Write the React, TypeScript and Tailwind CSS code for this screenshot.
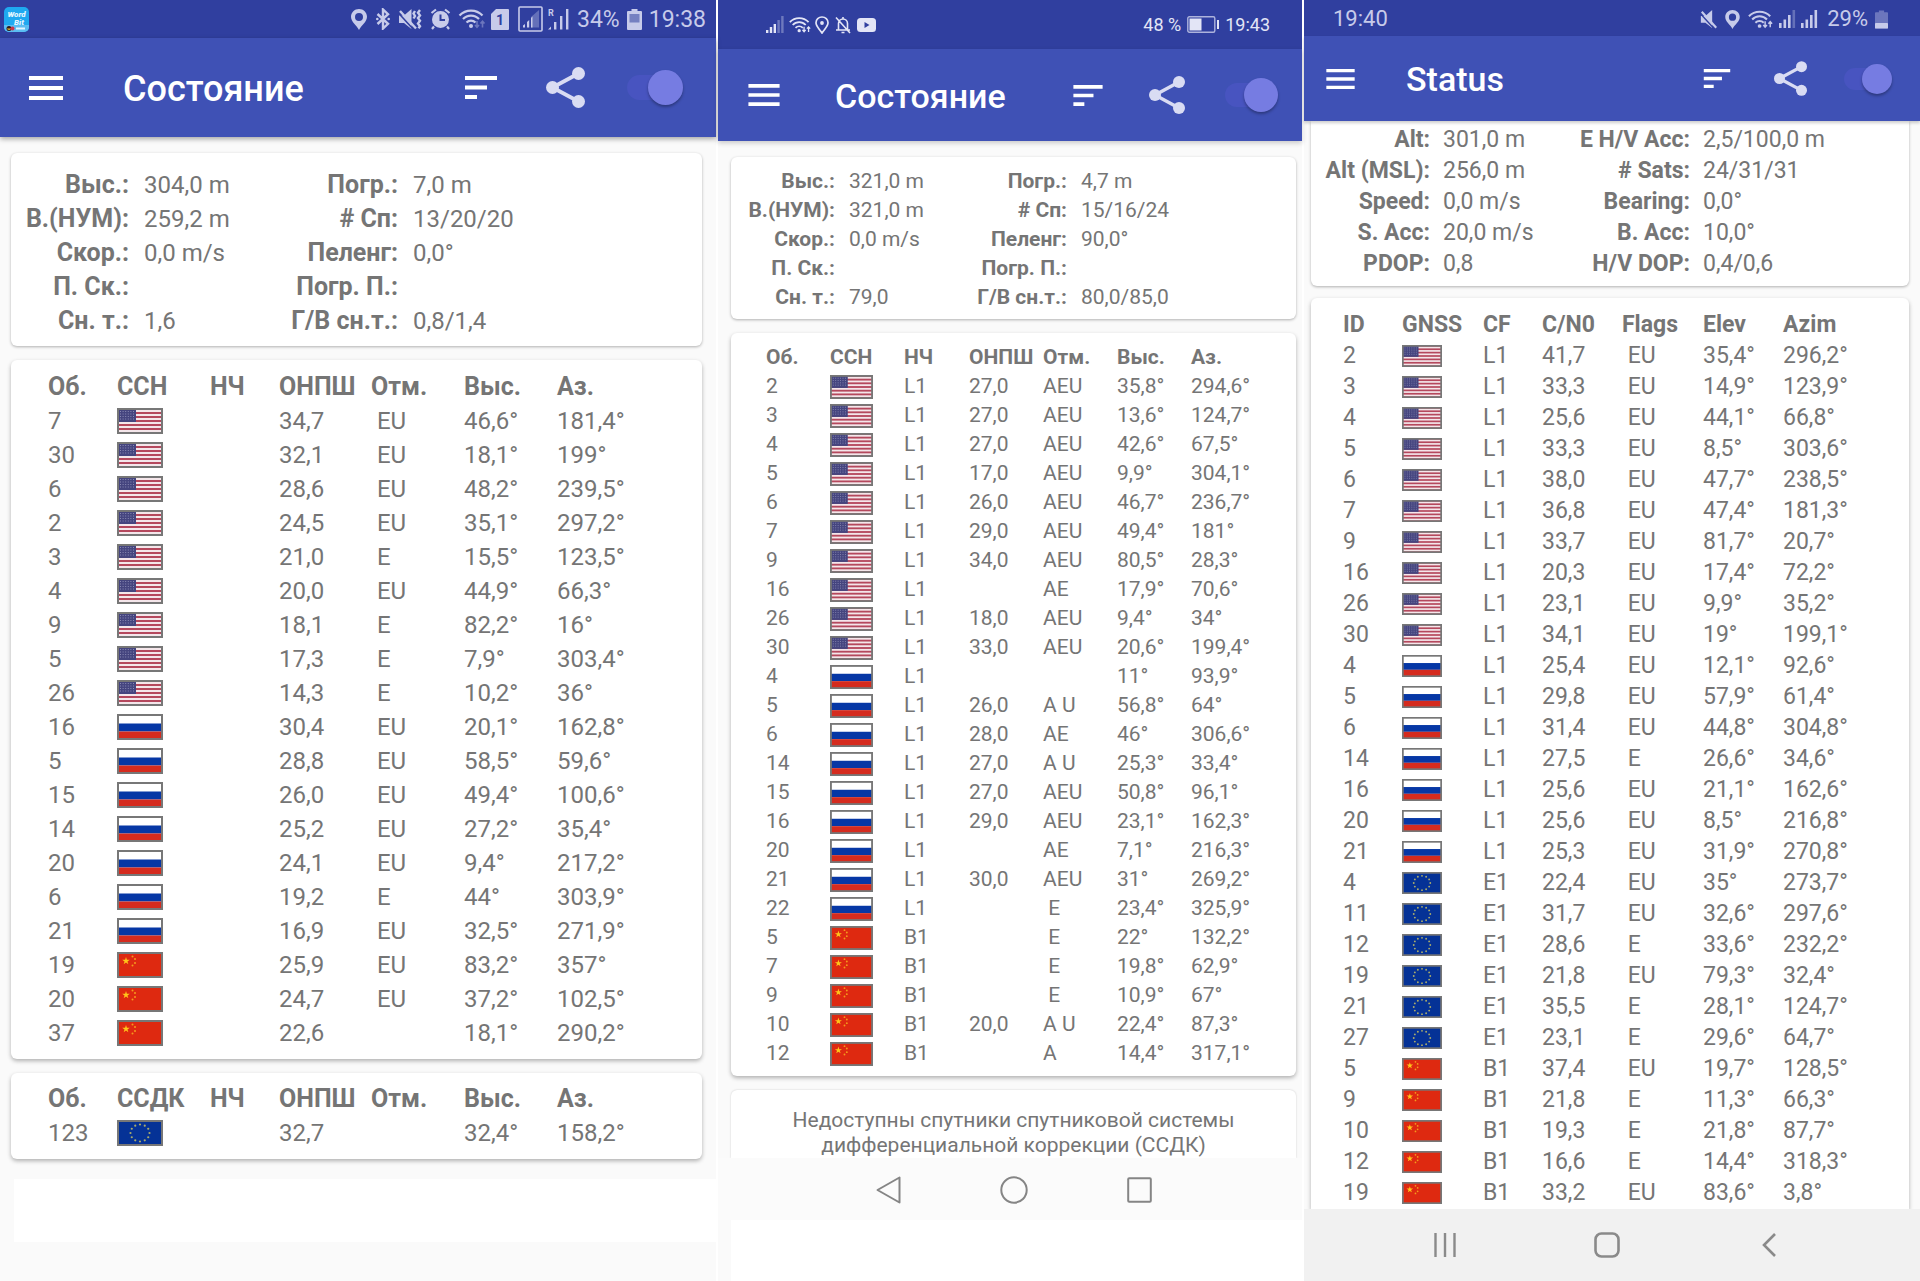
import React, { useState } from 'react';

type Country = 'us' | 'ru' | 'eu' | 'cn';

// id, flag, carrier, C/N0, flags, elevation, azimuth
type Satellite = [string, Country, string, string, string, string, string];

interface Theme {
  text: string;
  label: string;
  title: string;
  info: string;
  row: string;
  headRow: string;
  indent: string;
  flag: string;
  cols: string[];
}

const themes: Record<'left' | 'middle' | 'right', Theme> = {
  left: {
    text: 'text-[24px] leading-[34px]',
    label: 'text-[25px]',
    title: 'text-[36px]',
    info: 'grid-cols-[118px_110px_129px_1fr] gap-x-[15px]',
    row: 'h-[34px]',
    headRow: 'h-[34px]',
    indent: 'pl-[37px]',
    flag: 'h-[26px] w-[46px]',
    cols: ['w-[106px]', 'w-[93px]', 'w-[69px]', 'w-[92px]', 'w-[93px]', 'w-[93px]', ''],
  },
  middle: {
    text: 'text-[21px] leading-[29px]',
    label: 'text-[21px]',
    title: 'text-[34px]',
    info: 'grid-cols-[104px_92px_112px_1fr] gap-x-[14px]',
    row: 'h-[29px]',
    headRow: 'h-[29px]',
    indent: 'pl-[35px]',
    flag: 'h-[24px] w-[43px]',
    cols: ['w-[99px]', 'w-[74px]', 'w-[65px]', 'w-[74px]', 'w-[74px]', 'w-[74px]', ''],
  },
  right: {
    text: 'text-[23px] leading-[31px]',
    label: 'text-[23px]',
    title: 'text-[34px]',
    info: 'grid-cols-[119px_110px_124px_1fr] gap-x-[13px]',
    row: 'h-[31px]',
    headRow: 'h-[32px]',
    indent: 'pl-[32px]',
    flag: 'h-[22px] w-[40px]',
    cols: ['w-[91px]', 'w-[81px]', 'w-[59px]', 'w-[80px]', 'w-[81px]', 'w-[80px]', ''],
  },
};

const leftInfo = [
  ['Выс.:', '304,0 m', 'Погр.:', '7,0 m'],
  ['В.(НУМ):', '259,2 m', '# Сп:', '13/20/20'],
  ['Скор.:', '0,0 m/s', 'Пеленг:', '0,0°'],
  ['П. Ск.:', '', 'Погр. П.:', ''],
  ['Сн. т.:', '1,6', 'Г/В сн.т.:', '0,8/1,4'],
];

const middleInfo = [
  ['Выс.:', '321,0 m', 'Погр.:', '4,7 m'],
  ['В.(НУМ):', '321,0 m', '# Сп:', '15/16/24'],
  ['Скор.:', '0,0 m/s', 'Пеленг:', '90,0°'],
  ['П. Ск.:', '', 'Погр. П.:', ''],
  ['Сн. т.:', '79,0', 'Г/В сн.т.:', '80,0/85,0'],
];

const rightInfo = [
  ['Alt:', '301,0 m', 'E H/V Acc:', '2,5/100,0 m'],
  ['Alt (MSL):', '256,0 m', '# Sats:', '24/31/31'],
  ['Speed:', '0,0 m/s', 'Bearing:', '0,0°'],
  ['S. Acc:', '20,0 m/s', 'B. Acc:', '10,0°'],
  ['PDOP:', '0,8', 'H/V DOP:', '0,4/0,6'],
];

const gnssHead = ['Об.', 'ССН', 'НЧ', 'ОНПШ', 'Отм.', 'Выс.', 'Аз.'];
const sbasHead = ['Об.', 'ССДК', 'НЧ', 'ОНПШ', 'Отм.', 'Выс.', 'Аз.'];
const englishHead = ['ID', 'GNSS', 'CF', 'C/N0', 'Flags', 'Elev', 'Azim'];

const leftSats: Satellite[] = [
  ['7', 'us', '', '34,7', ' EU', '46,6°', '181,4°'],
  ['30', 'us', '', '32,1', ' EU', '18,1°', '199°'],
  ['6', 'us', '', '28,6', ' EU', '48,2°', '239,5°'],
  ['2', 'us', '', '24,5', ' EU', '35,1°', '297,2°'],
  ['3', 'us', '', '21,0', ' E', '15,5°', '123,5°'],
  ['4', 'us', '', '20,0', ' EU', '44,9°', '66,3°'],
  ['9', 'us', '', '18,1', ' E', '82,2°', '16°'],
  ['5', 'us', '', '17,3', ' E', '7,9°', '303,4°'],
  ['26', 'us', '', '14,3', ' E', '10,2°', '36°'],
  ['16', 'ru', '', '30,4', ' EU', '20,1°', '162,8°'],
  ['5', 'ru', '', '28,8', ' EU', '58,5°', '59,6°'],
  ['15', 'ru', '', '26,0', ' EU', '49,4°', '100,6°'],
  ['14', 'ru', '', '25,2', ' EU', '27,2°', '35,4°'],
  ['20', 'ru', '', '24,1', ' EU', '9,4°', '217,2°'],
  ['6', 'ru', '', '19,2', ' E', '44°', '303,9°'],
  ['21', 'ru', '', '16,9', ' EU', '32,5°', '271,9°'],
  ['19', 'cn', '', '25,9', ' EU', '83,2°', '357°'],
  ['20', 'cn', '', '24,7', ' EU', '37,2°', '102,5°'],
  ['37', 'cn', '', '22,6', '', '18,1°', '290,2°'],
];

const leftSbas: Satellite[] = [['123', 'eu', '', '32,7', '', '32,4°', '158,2°']];

const middleSats: Satellite[] = [
  ['2', 'us', 'L1', '27,0', 'AEU', '35,8°', '294,6°'],
  ['3', 'us', 'L1', '27,0', 'AEU', '13,6°', '124,7°'],
  ['4', 'us', 'L1', '27,0', 'AEU', '42,6°', '67,5°'],
  ['5', 'us', 'L1', '17,0', 'AEU', '9,9°', '304,1°'],
  ['6', 'us', 'L1', '26,0', 'AEU', '46,7°', '236,7°'],
  ['7', 'us', 'L1', '29,0', 'AEU', '49,4°', '181°'],
  ['9', 'us', 'L1', '34,0', 'AEU', '80,5°', '28,3°'],
  ['16', 'us', 'L1', '', 'AE', '17,9°', '70,6°'],
  ['26', 'us', 'L1', '18,0', 'AEU', '9,4°', '34°'],
  ['30', 'us', 'L1', '33,0', 'AEU', '20,6°', '199,4°'],
  ['4', 'ru', 'L1', '', '', '11°', '93,9°'],
  ['5', 'ru', 'L1', '26,0', 'A U', '56,8°', '64°'],
  ['6', 'ru', 'L1', '28,0', 'AE', '46°', '306,6°'],
  ['14', 'ru', 'L1', '27,0', 'A U', '25,3°', '33,4°'],
  ['15', 'ru', 'L1', '27,0', 'AEU', '50,8°', '96,1°'],
  ['16', 'ru', 'L1', '29,0', 'AEU', '23,1°', '162,3°'],
  ['20', 'ru', 'L1', '', 'AE', '7,1°', '216,3°'],
  ['21', 'ru', 'L1', '30,0', 'AEU', '31°', '269,2°'],
  ['22', 'ru', 'L1', '', ' E', '23,4°', '325,9°'],
  ['5', 'cn', 'B1', '', ' E', '22°', '132,2°'],
  ['7', 'cn', 'B1', '', ' E', '19,8°', '62,9°'],
  ['9', 'cn', 'B1', '', ' E', '10,9°', '67°'],
  ['10', 'cn', 'B1', '20,0', 'A U', '22,4°', '87,3°'],
  ['12', 'cn', 'B1', '', 'A', '14,4°', '317,1°'],
];

const rightSats: Satellite[] = [
  ['2', 'us', 'L1', '41,7', ' EU', '35,4°', '296,2°'],
  ['3', 'us', 'L1', '33,3', ' EU', '14,9°', '123,9°'],
  ['4', 'us', 'L1', '25,6', ' EU', '44,1°', '66,8°'],
  ['5', 'us', 'L1', '33,3', ' EU', '8,5°', '303,6°'],
  ['6', 'us', 'L1', '38,0', ' EU', '47,7°', '238,5°'],
  ['7', 'us', 'L1', '36,8', ' EU', '47,4°', '181,3°'],
  ['9', 'us', 'L1', '33,7', ' EU', '81,7°', '20,7°'],
  ['16', 'us', 'L1', '20,3', ' EU', '17,4°', '72,2°'],
  ['26', 'us', 'L1', '23,1', ' EU', '9,9°', '35,2°'],
  ['30', 'us', 'L1', '34,1', ' EU', '19°', '199,1°'],
  ['4', 'ru', 'L1', '25,4', ' EU', '12,1°', '92,6°'],
  ['5', 'ru', 'L1', '29,8', ' EU', '57,9°', '61,4°'],
  ['6', 'ru', 'L1', '31,4', ' EU', '44,8°', '304,8°'],
  ['14', 'ru', 'L1', '27,5', ' E', '26,6°', '34,6°'],
  ['16', 'ru', 'L1', '25,6', ' EU', '21,1°', '162,6°'],
  ['20', 'ru', 'L1', '25,6', ' EU', '8,5°', '216,8°'],
  ['21', 'ru', 'L1', '25,3', ' EU', '31,9°', '270,8°'],
  ['4', 'eu', 'E1', '22,4', ' EU', '35°', '273,7°'],
  ['11', 'eu', 'E1', '31,7', ' EU', '32,6°', '297,6°'],
  ['12', 'eu', 'E1', '28,6', ' E', '33,6°', '232,2°'],
  ['19', 'eu', 'E1', '21,8', ' EU', '79,3°', '32,4°'],
  ['21', 'eu', 'E1', '35,5', ' E', '28,1°', '124,7°'],
  ['27', 'eu', 'E1', '23,1', ' E', '29,6°', '64,7°'],
  ['5', 'cn', 'B1', '37,4', ' EU', '19,7°', '128,5°'],
  ['9', 'cn', 'B1', '21,8', ' E', '11,3°', '66,3°'],
  ['10', 'cn', 'B1', '19,3', ' E', '21,8°', '87,7°'],
  ['12', 'cn', 'B1', '16,6', ' E', '14,4°', '318,3°'],
  ['19', 'cn', 'B1', '33,2', ' EU', '83,6°', '3,8°'],
];

const starPath = 'M0 -1 L.225 -.309 L.951 -.309 L.363 .118 L.588 .809 L0 .382 L-.588 .809 L-.363 .118 L-.951 -.309 L-.225 -.309 Z';

const Flag = ({ country, className }: { country: Country; className: string }) => (
  <svg viewBox="0 0 46 26" preserveAspectRatio="none" className={`block ${className}`} role="img" aria-label={country}>
    {country === 'us' && (
      <>
        <rect width="46" height="26" fill="#f4e6ea" />
        {[0, 1, 2, 3, 4, 5, 6].map((i) => (
          <rect key={i} y={i * 4} width="46" height="2" fill="#b5485d" />
        ))}
        <rect width="19" height="14" fill="#45457f" />
        {[3.5, 6, 8.5, 11].map((y) => (
          <path key={y} d={`M3 ${y}H18`} stroke="#8a8ab4" strokeWidth="1" strokeDasharray="1 1.6" />
        ))}
      </>
    )}
    {country === 'ru' && (
      <>
        <rect width="46" height="26" fill="#ffffff" />
        <rect y="9.5" width="46" height="8" fill="#0637a5" />
        <rect y="17.5" width="46" height="9" fill="#d52b1e" />
      </>
    )}
    {country === 'eu' && (
      <>
        <rect width="46" height="26" fill="#053296" />
        {Array.from({ length: 12 }, (_, i) => (
          <circle
            key={i}
            cx={23 + 9.5 * Math.sin((i * Math.PI) / 6)}
            cy={13 - 8.5 * Math.cos((i * Math.PI) / 6)}
            r="1.1"
            fill="#a9ab6b"
          />
        ))}
      </>
    )}
    {country === 'cn' && (
      <>
        <rect width="46" height="26" fill="#de2910" />
        <path d={starPath} transform="translate(9 9) scale(4)" fill="#ffc61a" />
        {[[15.5, 4.5], [18, 7], [18, 11], [15.5, 13.5]].map(([x, y]) => (
          <circle key={`${x}-${y}`} cx={x} cy={y} r="1" fill="#f49a1c" />
        ))}
      </>
    )}
    <rect x="1" y="1" width="44" height="24" fill="none" stroke="#777777" strokeWidth="2" />
  </svg>
);

// Status bar icons
const PinIcon = ({ className }: { className: string }) => (
  <svg viewBox="0 0 16 21" className={className} fill="currentColor">
    <path fillRule="evenodd" d="M8 0C3.5 0 0 3.4 0 7.8 0 13 5.500 16 8 21c2.500-5 8-8 8-13.200C16 3.400 12.500 0 8 0Zm0 4a4 4 0 1 1 0 8 4 4 0 0 1 0-8Z" />
  </svg>
);

const PinOutlineIcon = () => (
  <svg viewBox="0 0 14 18" className="h-[18px] w-[14px]">
    <path d="M7 1C3.600 1 1 3.500 1 6.800 1 10.500 4.500 13 7 17c2.500-4 6-6.500 6-10.200C13 3.500 10.400 1 7 1Z" fill="none" stroke="currentColor" strokeWidth="1.700" />
    <circle cx="7" cy="7" r="1.900" fill="currentColor" />
  </svg>
);

const BluetoothIcon = () => (
  <svg viewBox="0 0 14 22" className="h-[22px] w-[14px]" fill="none" stroke="currentColor" strokeWidth="2.400">
    <path d="M1.500 6 12 15.800 7 20.500V1.500L12 6.200 1.500 16" />
    <circle cx="1.300" cy="11" r="1.300" fill="currentColor" stroke="none" />
    <circle cx="12.700" cy="11" r="1.300" fill="currentColor" stroke="none" />
  </svg>
);

const MuteIcon = ({ vibrate = false, className }: { vibrate?: boolean; className: string }) => (
  <svg viewBox={vibrate ? '0 0 23 21' : '0 0 18 21'} className={className} fill="currentColor">
    <path d="M0 6.500h5L12.500 0v20L5 14H0Z" />
    <path d="M-1 3.500 15 21" stroke="#303f9f" strokeWidth="1.600" />
    <path d="M1 2 17 19.500" stroke="currentColor" strokeWidth="2.400" />
    {vibrate && (
      <path d="M16 2 14.500 4.500 16 7l-1.500 2.500M21 1l-2 2.700 2 2.700-2 2.700 2 2.700-2 2.700 2 2.700-1.500 2" fill="none" stroke="currentColor" strokeWidth="2.400" />
    )}
  </svg>
);

const AlarmIcon = () => (
  <svg viewBox="0 0 21 22" className="h-[22px] w-[21px]">
    <circle cx="10.500" cy="11.500" r="8.500" fill="currentColor" />
    <path d="M1.500 5 6 1.500M19.500 5 15 1.500M4 18.500 2 21M17 18.500 19 21" stroke="currentColor" strokeWidth="2.200" />
    <path d="M10.500 6.500V12H15" fill="none" stroke="#303f9f" strokeWidth="2" />
  </svg>
);

const WifiIcon = ({ className, dimArrows = false }: { className: string; dimArrows?: boolean }) => (
  <svg viewBox="0 0 27 20" className={className} fill="none" stroke="currentColor" strokeWidth="2.200">
    <path d="M1 6.500a16 16 0 0 1 23 0M4.500 10a11 11 0 0 1 16 0M8 13.500a6.500 6.500 0 0 1 9 0" />
    <circle cx="12.500" cy="17" r="2" fill="currentColor" stroke="none" />
    <path d="M18.500 12v6M16.500 16l2 2.200 2-2.200M24 18.500v-6M22 14.500l2-2.200 2 2.200" strokeWidth="1.600" opacity={dimArrows ? 0.4 : 1} />
  </svg>
);

const SignalIcon = ({ className, dim = 0 }: { className: string; dim?: number }) => (
  <svg viewBox="0 0 17 18" className={className} fill="currentColor">
    {[0, 1, 2, 3].map((i) => (
      <rect key={i} x={i * 4.5} y={[13, 9.5, 5, 0][i]} width="2.600" height={[5, 8.5, 13, 18][i]} opacity={i > 3 - dim ? 0.35 : 1} />
    ))}
  </svg>
);

// five bars, the two tallest are off
const FiveBarSignalIcon = () => (
  <svg viewBox="0 0 18 17" className="h-[17px] w-[18px]" fill="currentColor">
    {[3, 6, 9, 13, 17].map((height, i) => (
      <rect key={height} x={i * 3.8} y={17 - height} width="2.400" height={height} opacity={i > 2 ? 0.35 : 1} />
    ))}
  </svg>
);

const SimIcon = () => (
  <svg viewBox="0 0 18 21" className="h-[21px] w-[18px]">
    <path d="M5 0h12a1 1 0 0 1 1 1v19a1 1 0 0 1-1 1H1a1 1 0 0 1-1-1V5Z" fill="currentColor" />
    <text x="9" y="16" textAnchor="middle" fontSize="14" fontWeight="700" fill="#303f9f">1</text>
  </svg>
);

const BoxedSignalIcon = () => (
  <svg viewBox="0 0 25 26" className="h-[26px] w-[25px]" fill="currentColor">
    <rect x="1" y="1" width="23" height="24" rx="1" fill="none" stroke="currentColor" strokeWidth="1.600" />
    <path d="M5 21.500V19.500L7 18v3.500ZM9 21.500V16l2.200-2v7.500Z" />
    <path d="M13 21.500V11l8-7v17.500Z" opacity=".35" />
    <path d="M13 21.500V12l1.500-1.500v11Z" />
  </svg>
);

const RoamingSignalIcon = () => (
  <svg viewBox="0 0 21 22" className="h-[22px] w-[21px]" fill="currentColor">
    <text x="0" y="8" fontSize="9" fontWeight="700">R</text>
    <path d="M0 21.500l3-3v3ZM6 14h2.400v7.500H6ZM12 8h2.400v13.500H12ZM18 1h2.400v20.500H18Z" />
  </svg>
);

const BatteryIcon = ({ className, level }: { className: string; level: 'mid' | 'low' }) => (
  <svg viewBox="0 0 15 21" className={className} fill="currentColor">
    <path d="M4.500 0h6v2H14a1 1 0 0 1 1 1v17a1 1 0 0 1-1 1H1a1 1 0 0 1-1-1V3a1 1 0 0 1 1-1h3.500Z" opacity={level === 'low' ? 0.4 : 1} />
    {level === 'mid' ? <rect x="2.500" y="5" width="10" height="8.500" fill="#7580c1" /> : <rect y="14.500" width="15" height="6.500" rx="1" />}
  </svg>
);

const BellOffIcon = () => (
  <svg viewBox="0 0 16 18" className="h-[18px] w-[16px]" fill="none" stroke="currentColor" strokeWidth="1.600">
    <path d="M3.500 13.500V7.500C3.500 5 5.500 3 8 3s4.500 2 4.500 4.500v6M1 14h14M8 1v2M6.500 16.500h3M1 1.500 15 17" />
  </svg>
);

const VideoIcon = () => (
  <svg viewBox="0 0 19 14" className="h-[14px] w-[19px]">
    <rect width="19" height="14" rx="3.500" fill="currentColor" />
    <path d="M7.500 4v6l5-3Z" fill="#303f9f" />
  </svg>
);

const WideBatteryIcon = () => (
  <svg viewBox="0 0 32 17" className="h-[17px] w-[32px]">
    <rect x=".8" y=".8" width="27" height="15.400" rx="1.500" fill="none" stroke="currentColor" strokeWidth="1.400" opacity=".7" />
    <rect x="2.500" y="2.500" width="12" height="12" fill="currentColor" />
    <rect x="30" y="4" width="2" height="9" fill="currentColor" />
  </svg>
);

const WordBitLogo = () => (
  <svg viewBox="0 0 25 25" className="h-[25px] w-[25px]" role="img" aria-label="Word Bit">
    <rect width="25" height="25" rx="5" fill="#1fa9f0" />
    <path d="M0 18h25v2a5 5 0 0 1-5 5H5a5 5 0 0 1-5-5Z" fill="#5bbdf2" />
    <text x="12.500" y="10" textAnchor="middle" fontSize="8" fontWeight="900" fontStyle="italic" fill="#e3f6ff">Word</text>
    <text x="15" y="17.500" textAnchor="middle" fontSize="8" fontWeight="900" fontStyle="italic" fill="#e3f6ff">Bit</text>
    <circle cx="5" cy="21.500" r="2.500" fill="#2c1a1a" />
    <path d="M2.800 21.500a2.500 2.500 0 0 0 4.500 0Z" fill="#f2b824" />
    <circle cx="8.500" cy="21.500" r="2" fill="#c9364a" />
    <rect x="12" y="20.500" width="9" height="2" fill="#e3f6ff" />
  </svg>
);

// Toolbar icons
const MenuIcon = ({ className }: { className: string }) => (
  <svg viewBox="0 0 34 24" className={className} fill="currentColor">
    <path d="M0 0h34v4H0ZM0 10h34v4H0ZM0 20h34v4H0Z" />
  </svg>
);

const SortIcon = ({ className }: { className: string }) => (
  <svg viewBox="0 0 32 23" className={className} fill="currentColor">
    <path d="M0 0h32v4H0ZM0 9.500h22v4H0ZM0 19h12v4H0Z" />
  </svg>
);

const ShareIcon = ({ className }: { className: string }) => (
  <svg viewBox="0 0 39 41" className={className} fill="currentColor">
    <path d="M6.500 20.500 32.500 6.500M6.500 20.500l26 14" stroke="currentColor" strokeWidth="3.800" />
    <circle cx="6.500" cy="20.500" r="6.500" />
    <circle cx="32.500" cy="6.500" r="6.500" />
    <circle cx="32.500" cy="34.500" r="6.500" />
  </svg>
);

const Toggle = ({ size, label }: { size: 'lg' | 'md' | 'sm'; label: string }) => {
  const [on, setOn] = useState(true);
  const box = { lg: 'h-[35px] w-[56px]', md: 'h-[34px] w-[53px]', sm: 'h-[30px] w-[48px]' }[size];
  const track = { lg: 'h-[25px]', md: 'h-[24px]', sm: 'h-[22px]' }[size];
  const thumb = { lg: 'size-[35px]', md: 'size-[34px]', sm: 'size-[30px]' }[size];

  return (
    <label className={`relative flex items-center ${box}`}>
      <input
        type="checkbox"
        className="sr-only"
        aria-label={label}
        checked={on}
        onChange={(e) => setOn(e.target.checked)}
      />
      <span className={`w-full rounded-full bg-[#4854c0] ${track}`} />
      <span className={`absolute top-0 rounded-full bg-[#767ce2] shadow-[0_2px_3px_rgba(0,0,0,0.3)] ${on ? 'right-0' : 'left-0'} ${thumb}`} />
    </label>
  );
};

const InfoCard = ({ rows, theme, className }: { rows: string[][]; theme: Theme; className: string }) => (
  <section className={`bg-white shadow-[0_1px_3px_rgba(0,0,0,0.3)] ${className}`}>
    <dl className={`grid text-[#757575] ${theme.text} ${theme.info}`}>
      {rows.map(([label, value, label2, value2]) => (
        <React.Fragment key={label}>
          <dt className={`text-right font-bold whitespace-nowrap ${theme.label}`}>{label}</dt>
          <dd className="whitespace-nowrap">{value}</dd>
          <dt className={`text-right font-bold whitespace-nowrap ${theme.label}`}>{label2}</dt>
          <dd className="whitespace-nowrap">{value2}</dd>
        </React.Fragment>
      ))}
    </dl>
  </section>
);

const SatelliteCard = ({
  head,
  rows,
  theme,
  className,
}: {
  head: string[];
  rows: Satellite[];
  theme: Theme;
  className: string;
}) => (
  <section className={`bg-white shadow-[0_2px_4px_rgba(0,0,0,0.3)] ${className}`}>
    <table className={`w-full table-fixed text-left text-[#757575] ${theme.text}`}>
      <colgroup>
        {/* last column takes what is left */}
        {theme.cols.map((width, i) => (
          <col key={i} className={width} />
        ))}
      </colgroup>
      <thead>
        <tr className={`${theme.headRow} ${theme.label}`}>
          {head.map((name, i) => (
            <th key={name} className={`p-0 font-bold whitespace-nowrap ${i === 0 ? theme.indent : ''}`}>{name}</th>
          ))}
        </tr>
      </thead>
      <tbody>
        {rows.map(([id, country, carrier, cn0, flags, elev, azim]) => (
          <tr key={`${country}-${id}`} className={theme.row}>
            <td className={`p-0 ${theme.indent}`}>{id}</td>
            <td className="p-0"><Flag country={country} className={theme.flag} /></td>
            <td className="p-0">{carrier}</td>
            <td className="p-0">{cn0}</td>
            <td className="p-0 whitespace-pre">{flags}</td>
            <td className="p-0">{elev}</td>
            <td className="p-0">{azim}</td>
          </tr>
        ))}
      </tbody>
    </table>
  </section>
);

const LeftPhone = () => (
  <div className="flex min-w-0 flex-col bg-[#fafafa]">
    <div className="flex h-[38px] items-center bg-[#303f9f] pr-[10px] pl-[4px] text-[#c7cbea]">
      <WordBitLogo />
      <div className="ml-auto flex items-center">
        <PinIcon className="h-[21px] w-[16px]" />
        <span className="ml-[9px]"><BluetoothIcon /></span>
        <MuteIcon vibrate className="ml-[9px] h-[21px] w-[23px]" />
        <span className="ml-[8px]"><AlarmIcon /></span>
        <WifiIcon dimArrows className="ml-[7px] h-[20px] w-[28px]" />
        <span className="ml-[5px]"><SimIcon /></span>
        <span className="ml-[9px]"><BoxedSignalIcon /></span>
        <span className="ml-[5px]"><RoamingSignalIcon /></span>
        <span className="ml-[8px] text-[23px] leading-none">34%</span>
        <BatteryIcon level="mid" className="ml-[7px] h-[21px] w-[15px]" />
        <span className="ml-[7px] text-[23px] leading-none">19:38</span>
      </div>
    </div>
    <header className="relative flex h-[99px] items-center bg-[#3f51b5] pr-[33px] pl-[29px] text-white shadow-[0_2px_5px_rgba(0,0,0,0.35)]">
      <button type="button" aria-label="Меню"><MenuIcon className="h-[24px] w-[34px]" /></button>
      <h1 className={`ml-[60px] pt-[2px] font-medium ${themes.left.title}`}>Состояние</h1>
      <button type="button" aria-label="Сортировка" className="ml-auto"><SortIcon className="h-[23px] w-[32px]" /></button>
      <button type="button" aria-label="Поделиться" className="mr-[42px] ml-[49px] text-[#d9dcf3]"><ShareIcon className="h-[41px] w-[39px]" /></button>
      <Toggle size="lg" label="GPS" />
    </header>
    <main className="flex flex-col gap-[14px] pt-[16px] pr-[14px] pl-[11px]">
      <InfoCard rows={leftInfo} theme={themes.left} className="rounded-md pt-[15px] pb-[8px]" />
      <SatelliteCard head={gnssHead} rows={leftSats} theme={themes.left} className="rounded-md pt-[10px] pb-[9px]" />
      <SatelliteCard head={sbasHead} rows={leftSbas} theme={themes.left} className="rounded-md pt-[9px] pb-[9px]" />
    </main>
    <div className="mt-[20px] ml-[14px] h-[63px] bg-white" />
  </div>
);

const MiddlePhone = () => (
  <div className="flex min-w-0 flex-col bg-[#fafafa]">
    <div className="flex h-[49px] items-center bg-[#303f9f] pr-[32px] pl-[48px] text-[18px] leading-none text-[#e3e5f6]">
      <FiveBarSignalIcon />
      <WifiIcon className="ml-[5px] h-[18px] w-[22px]" />
      <span className="ml-[4px]"><PinOutlineIcon /></span>
      <span className="ml-[6px]"><BellOffIcon /></span>
      <span className="ml-[6px]"><VideoIcon /></span>
      <span className="ml-auto">48 %</span>
      <span className="mx-[6px]"><WideBatteryIcon /></span>
      <span>19:43</span>
    </div>
    <header className="relative flex h-[92px] items-center bg-[#3f51b5] pr-[24px] pl-[30px] text-white shadow-[0_2px_5px_rgba(0,0,0,0.2)]">
      <button type="button" aria-label="Меню"><MenuIcon className="h-[22px] w-[32px]" /></button>
      <h1 className={`ml-[55px] pt-[2px] font-medium ${themes.middle.title}`}>Состояние</h1>
      <button type="button" aria-label="Сортировка" className="ml-auto"><SortIcon className="h-[21px] w-[30px]" /></button>
      <button type="button" aria-label="Поделиться" className="mr-[40px] ml-[46px] text-[#d9dcf3]"><ShareIcon className="h-[38px] w-[36px]" /></button>
      <Toggle size="md" label="GPS" />
    </header>
    <main className="flex flex-col gap-[14px] pt-[16px] pr-[6px] pl-[13px]">
      <InfoCard rows={middleInfo} theme={themes.middle} className="rounded-md pt-[10px] pb-[7px]" />
      <SatelliteCard head={gnssHead} rows={middleSats} theme={themes.middle} className="rounded-md pt-[10px] pb-[8px]" />
      <section className="rounded-t-md bg-white px-[40px] pt-[18px] text-center text-[21px] leading-[25px] text-[#757575] shadow-[0_0_2px_rgba(0,0,0,0.2)]">
        <p>Недоступны спутники спутниковой системы дифференциальной коррекции (ССДК)</p>
      </section>
    </main>
    <nav className="relative flex h-[62px] items-center justify-center gap-[99px] bg-[#fbfbfb] pt-[2px] pl-[7px] text-[#858585]">
      <button type="button" aria-label="Назад">
        <svg viewBox="0 0 25 28" className="h-[28px] w-[25px]" fill="none" stroke="currentColor" strokeWidth="2" strokeLinejoin="round">
          <path d="M23.500 1.500v25L1.500 14Z" />
        </svg>
      </button>
      <button type="button" aria-label="Домой">
        <svg viewBox="0 0 28 28" className="size-[28px]" fill="none" stroke="currentColor" strokeWidth="2">
          <circle cx="14" cy="14" r="12.700" />
        </svg>
      </button>
      <button type="button" aria-label="Недавние">
        <svg viewBox="0 0 25 26" className="h-[26px] w-[25px]" fill="none" stroke="currentColor" strokeWidth="2">
          <rect x="1.200" y="1.200" width="22.600" height="23.600" rx="1" />
        </svg>
      </button>
    </nav>
    <div className="ml-[13px] flex-1 bg-white" />
  </div>
);

const RightPhone = () => (
  <div className="flex min-w-0 flex-col bg-[#fafafa]">
    <div className="flex h-[36px] items-center bg-[#303f9f] pt-[2px] pr-[32px] pl-[29px] text-[22px] leading-none text-[#c7cbea]">
      <span>19:40</span>
      <MuteIcon className="ml-auto h-[19px] w-[18px]" />
      <PinIcon className="ml-[7px] h-[19px] w-[15px]" />
      <WifiIcon className="ml-[8px] h-[19px] w-[25px]" />
      <SignalIcon dim={1} className="ml-[6px] h-[18px] w-[17px]" />
      <SignalIcon className="ml-[5px] h-[18px] w-[17px]" />
      <span className="ml-[9px]">29%</span>
      <BatteryIcon level="low" className="ml-[7px] h-[19px] w-[13px]" />
    </div>
    <header className="relative flex h-[85px] items-center bg-[#3f51b5] pr-[28px] pl-[22px] text-white shadow-[0_2px_3px_rgba(0,0,0,0.2)]">
      <button type="button" aria-label="Menu"><MenuIcon className="h-[20px] w-[29px]" /></button>
      <h1 className={`ml-[51px] pt-[2px] font-medium ${themes.right.title}`}>Status</h1>
      <button type="button" aria-label="Sort" className="ml-auto"><SortIcon className="h-[19px] w-[28px]" /></button>
      <button type="button" aria-label="Share" className="mr-[37px] ml-[43px] text-[#d9dcf3]"><ShareIcon className="h-[35px] w-[33px]" /></button>
      <Toggle size="sm" label="GPS" />
    </header>
    <main className="flex flex-col gap-[12px] pr-[11px] pl-[7px]">
      <InfoCard rows={rightInfo} theme={themes.right} className="rounded-b-md pt-[3px] pb-[7px]" />
      <SatelliteCard head={englishHead} rows={rightSats} theme={themes.right} className="rounded-t-md pt-[10px] pb-[1px]" />
    </main>
    <nav className="relative flex flex-1 items-center justify-center gap-[136px] bg-[#f1f1f1] pr-[10px] text-[#8a8a8a]">
      <button type="button" aria-label="Recents" className="flex w-[26px] justify-center">
        <svg viewBox="0 0 22 24" className="h-[24px] w-[22px]" stroke="currentColor" strokeWidth="2.400">
          <path d="M1.500 0v24M11 0v24M20.500 0v24" />
        </svg>
      </button>
      <button type="button" aria-label="Home" className="flex w-[26px] justify-center">
        <svg viewBox="0 0 26 26" className="size-[26px]" fill="none" stroke="currentColor" strokeWidth="2.600">
          <rect x="1.500" y="1.500" width="23" height="23" rx="6" />
        </svg>
      </button>
      <button type="button" aria-label="Back" className="flex w-[26px] justify-center">
        <svg viewBox="0 0 14 24" className="h-[24px] w-[14px]" fill="none" stroke="currentColor" strokeWidth="2.600">
          <path d="M13 1 2 12l11 11" />
        </svg>
      </button>
    </nav>
  </div>
);

const App = () => {
  return (
    <div className="grid min-h-screen grid-cols-[716fr_584fr_616fr] gap-x-[2px] overflow-hidden bg-white [font-family:Roboto,sans-serif]">
      <LeftPhone />
      <MiddlePhone />
      <RightPhone />
    </div>
  );
};

export default App;
